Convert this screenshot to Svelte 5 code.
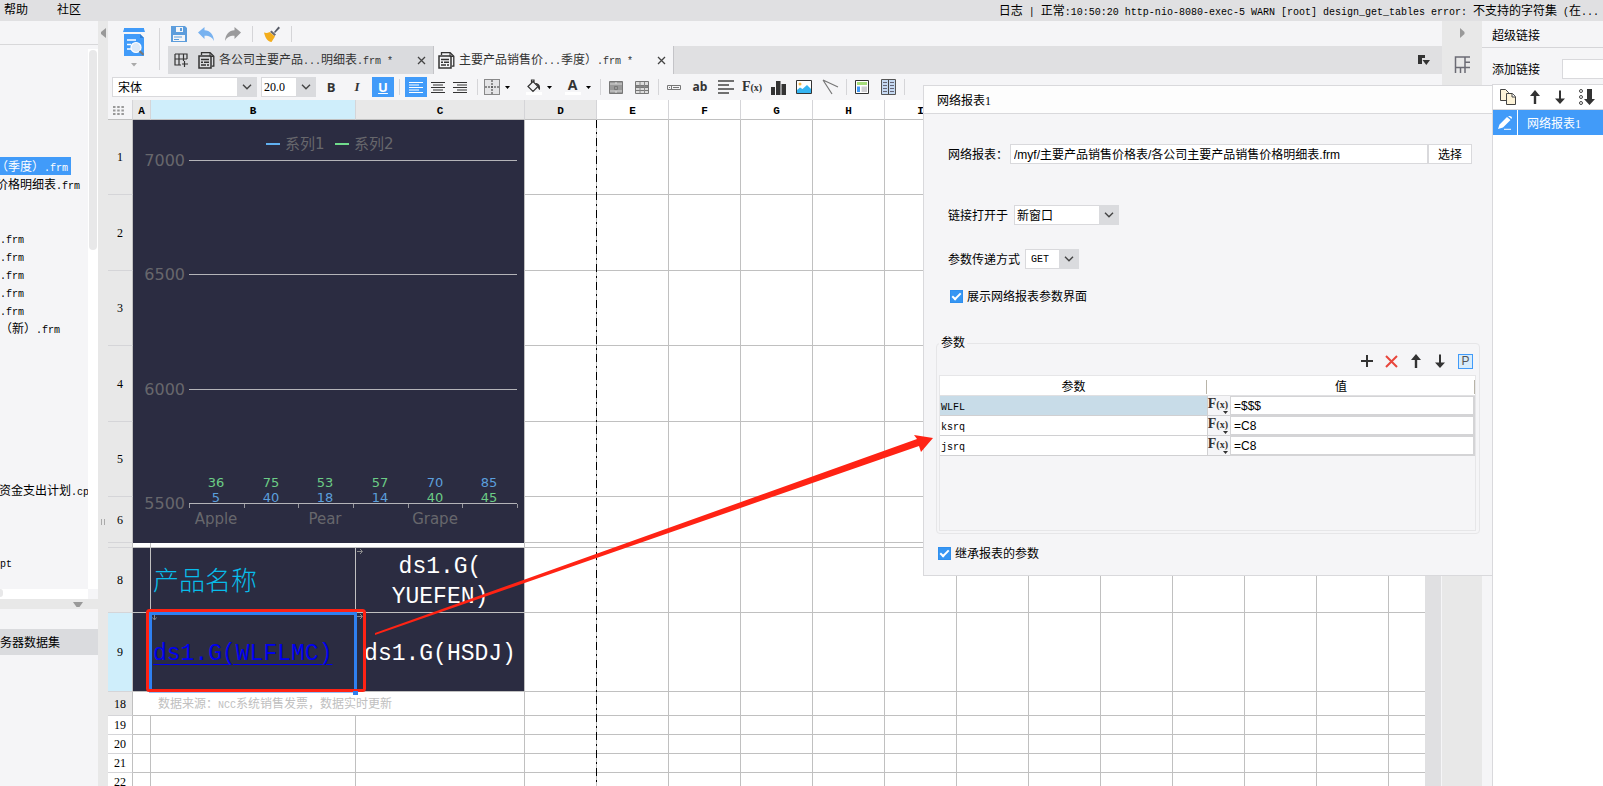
<script>
  let fontName = $state("宋体");
  let fontSize = $state("20.0");
  let reportPath = $state("/myf/主要产品销售价格表/各公司主要产品销售价格明细表.frm");
  let linkName = $state("");
  let openIn = $state("新窗口");
  let method = $state("GET");
  let showParams = $state(true);
  let inherit = $state(true);
  let activeTab = $state(1);

  let params = $state([
    { name: "WLFL", value: "=$$$" },
    { name: "ksrq", value: "=C8" },
    { name: "jsrq", value: "=C8" },
  ]);

  const logText =
    "日志 | 正常:10:50:20 http-nio-8080-exec-5 WARN [root] design_get_tables error: 不支持的字符集 (在...";

  // the tree is scrolled sideways, so most rows only show their tail
  const files = [
    "（季度）.frm", "价格明细表.frm", "", "", ".frm", ".frm", ".frm", ".frm", ".frm",
    "（新）.frm", "", "", "", "", "", "", "", "", "资金支出计划.cp", "", "", "", "pt",
  ];
  const indents = { 0: -4, 1: -4, 18: -1 };

  const tabs = ["各公司主要产品...明细表.frm *", "主要产品销售价...季度）.frm *"];

  const columns = [..."ABCDEFGHIJKLMNO", ""];
  const colWidths = [25, 18, 205, 169, ...Array(13).fill(72)];
  const tableWidth = colWidths.reduce((a, b) => a + b, 0);
  const rest = columns.slice(3);
  const rows = [
    { n: 1, h: 75 }, { n: 2, h: 76 }, { n: 3, h: 75 }, { n: 4, h: 76 }, { n: 5, h: 75 },
    { n: 6, h: 46 }, { n: "", h: 5 }, { n: 8, h: 65 }, { n: 9, h: 79 }, { n: 18, h: 24 },
    { n: 19, h: 19 }, { n: 20, h: 19 }, { n: 21, h: 19 }, { n: 22, h: 19 },
  ];

  const gridLines = [
    { label: "7000", y: 41 },
    { label: "6500", y: 155 },
    { label: "6000", y: 270 },
    { label: "5500", y: 384 },
  ];
  const points = [
    { x: 83, top: 36, bottom: 5, name: "Apple" },
    { x: 138, top: 75, bottom: 40 },
    { x: 192, top: 53, bottom: 18, name: "Pear" },
    { x: 247, top: 57, bottom: 14 },
    { x: 302, top: 70, bottom: 40, name: "Grape", swap: true },
    { x: 356, top: 85, bottom: 45, swap: true },
  ];
  const ticks = [56, 111, 165, 220, 275, 329, 384];
</script>

{#snippet mixed(text)}
  {#each text.split(/([\x20-\x7e]+)/) as part}{#if /^[\x20-\x7e]/.test(part)}<span class="en">{part}</span>{:else}{part}{/if}{/each}
{/snippet}

{#snippet chevron()}
  <span class="chevron">
    <svg width="10" height="6" viewBox="0 0 10 6"><path d="M1 .8 5 4.8 9 .8" fill="none" stroke="#444" stroke-width="1.4" /></svg>
  </span>
{/snippet}

{#snippet arrowUp()}
  <svg width="12" height="16" viewBox="0 0 12 16"><path d="M6 1 11 7H7.2v8H4.8V7H1z" fill="#333" /></svg>
{/snippet}

{#snippet arrowDown()}
  <svg width="12" height="16" viewBox="0 0 12 16"><path d="M6 15 1 9.5H5V1.5H7V9.5h4z" fill="#333" /></svg>
{/snippet}

{#snippet docIcon()}
  <svg width="17" height="17" viewBox="0 0 17 17" fill="none" stroke="#333">
    <path d="M3.500 3V.7h8.600l3.700 3.600v9.900h-2" stroke-width="1.300" />
    <path d="M12 1v3.500h3.600" />
    <path d="M1 4h12v12H1z" stroke-width="1.500" />
    <path d="M3 7.500h8M3 10.200h2M6 10.200h5M3 13h5M9 13h2" stroke-width="1.500" />
  </svg>
{/snippet}

{#snippet fx()}
  <span class="fx">F<small>(x)</small></span>
{/snippet}

{#snippet expandRight()}
  <svg class="expand" width="7" height="7" viewBox="0 0 7 7"><path d="M1 3.500h5M4 1l2.500 2.500L4 6" fill="none" stroke="#8c8c8c" /></svg>
{/snippet}

<div class="app">
  <header class="menubar">
    <nav>
      <a href="#help">帮助</a>
      <a href="#community">社区</a>
    </nav>
    <p class="log">{@render mixed(logText)}</p>
  </header>

  <div class="body">
    <aside class="left">
      <div class="left-head"></div>
      <div class="tree">
        <ul>
          {#each files as file, i}
            <li><span class:selected={i === 0} style="margin-left: {indents[i] ?? 0}px">{@render mixed(file)}</span></li>
          {/each}
        </ul>
        <div class="track"><i></i></div>
      </div>
      <div class="htrack"><i></i></div>
      <div class="hsplit">
        <svg width="10" height="6" viewBox="0 0 10 6"><path d="M0 0h10L6.500 5h-3z" fill="#999" /></svg>
      </div>
      <div class="dataset">
        <div class="dataset-row">务器数据集</div>
      </div>
    </aside>

    <div class="vsplit">
      <svg width="6" height="10" viewBox="0 0 6 10"><path d="M5 0v10L0 6V4z" fill="#999" /></svg>
      <svg width="4" height="6" viewBox="0 0 4 6"><path d="M.5 0v6M3.500 0v6" stroke="#aaa" /></svg>
    </div>

    <main class="editor">
      <div class="top">
        <button class="preview" aria-label="预览">
          <svg width="22" height="29" viewBox="0 0 22 29">
            <path d="M1 0h20v1l1 3H0l1-3z" fill="#419bf9" />
            <path d="M1 6h16l4 4v18H1z" fill="#419bf9" />
            <path d="M17 6v4h4z" fill="#2f7fd6" />
            <path d="M4 12h9M4 16.500h4M4 21h4" stroke="#fff" stroke-width="1.6" />
            <circle cx="13" cy="19.500" r="5" fill="#dce9f8" stroke="#fff" stroke-width="1.2" />
            <path d="m16.500 23 4 3.800" stroke="#777" stroke-width="2" />
          </svg>
          <svg width="6" height="4" viewBox="0 0 6 4"><path d="M0 0h6L3 3.500z" fill="#aaa" /></svg>
        </button>
        <div class="top-right">
          <div class="quick">
            <button aria-label="保存">
              <svg width="16" height="16" viewBox="0 0 16 16">
                <path d="M0 0h14l2 2v14H0z" fill="#5d9ddc" />
                <path d="M5 1h7v5H5zM2 9h12v6H2z" fill="#f4f5f7" />
                <path d="M9 2h2v3H9z" fill="#5d9ddc" />
                <path d="M3 11h8M3 13.500h5" stroke="#5d9ddc" />
              </svg>
            </button>
            <button aria-label="撤销">
              <svg width="16" height="14" viewBox="0 0 16 14"><path d="M0 5.500 6.500 0v3.200C12 3.500 15.500 7 16 14c-2-4-5-5.400-9.500-5.200V12z" fill="#78b2f0" /></svg>
            </button>
            <button aria-label="重做">
              <svg width="16" height="14" viewBox="0 0 16 14"><path d="M16 5.500 9.500 0v3.200C4 3.500.5 7 0 14c2-4 5-5.400 9.500-5.200V12z" fill="#9a9a9c" /></svg>
            </button>
            <i class="bar"></i>
            <button aria-label="格式刷">
              <svg width="16" height="16" viewBox="0 0 16 16">
                <path d="m10 6 4.500-5.500L16 2l-5 5z" fill="#555a66" />
                <path d="m7.500 4.500 4.500 4-1.500 1.500-4.500-4z" fill="#6b6b70" />
                <path d="M5.500 6 11 10.500 7.500 16C4 15.500 1.500 13 0 6.500c2 .8 4 .5 5.500-.5z" fill="#f3ad1c" />
              </svg>
            </button>
            <i class="bar"></i>
          </div>
          <div class="tabs">
            <button class="new-tab" aria-label="新建">
              <svg width="15" height="15" viewBox="0 0 15 15" fill="none" stroke="#333" stroke-width="1.2">
                <path d="M1 1h12v5M1 1v11h6M1 6h12M5 1v11M9.500 1v7M10.500 8v6M8 11h6" />
              </svg>
            </button>
            {#each tabs as tab, i}
              <div class="tab" class:active={activeTab === i}>
                <button class="tab-name" onclick={() => (activeTab = i)}>
                  {@render docIcon()}
                  <span class="tab-text">{@render mixed(tab)}</span>
                </button>
                <button aria-label="关闭">
                  <svg width="9" height="9" viewBox="0 0 9 9"><path d="m1 1 7 7M8 1 1 8" stroke="#444" stroke-width="1.3" /></svg>
                </button>
              </div>
            {/each}
            <button class="tab-list" aria-label="标签列表">
              <svg width="12" height="11" viewBox="0 0 12 11"><path d="M0 0h7v3H4v6H0zM4.500 5H12l-3.700 5z" fill="#333" /></svg>
            </button>
          </div>
        </div>
      </div>

      <div class="format">
        <label class="combo font">
          <select bind:value={fontName} aria-label="字体"><option>宋体</option></select>
          {@render chevron()}
        </label>
        <label class="combo size">
          <select bind:value={fontSize} aria-label="字号"><option>20.0</option></select>
          {@render chevron()}
        </label>
        <div class="style-group">
          <button class="b">B</button>
          <button class="i">I</button>
          <button class="u on">U</button>
        </div>
        <i class="sep"></i>
        <div class="align-group">
          <button class="on" aria-label="左对齐">
            <svg width="14" height="11" viewBox="0 0 14 11"><path d="M0 .5h14M0 3h10M0 5.500h14M0 8h10M0 10.500h14" stroke="#fff" /></svg>
          </button>
          <button aria-label="居中">
            <svg width="14" height="11" viewBox="0 0 14 11"><path d="M0 .5h14M2 3h10M0 5.500h14M2 8h10M0 10.500h14" stroke="#333" /></svg>
          </button>
          <button aria-label="右对齐">
            <svg width="14" height="11" viewBox="0 0 14 11"><path d="M0 .5h14M4 3h10M0 5.500h14M4 8h10M0 10.500h14" stroke="#333" /></svg>
          </button>
        </div>
        <i class="sep"></i>
        <button class="drop border" aria-label="边框">
          <svg width="16" height="16" viewBox="0 0 16 16"><path d="M.5.500h15v15H.5z" fill="#e4e4e6" stroke="#222" stroke-dasharray="1 1" /><path d="M8 1v14M1 8h14" stroke="#333" stroke-dasharray="2 1" /></svg>
          <svg width="5" height="3" viewBox="0 0 5 3"><path d="M0 0h5L2.500 3z" /></svg>
        </button>
        <button class="drop" aria-label="填充">
          <svg width="16" height="16" viewBox="0 0 16 16">
            <path d="M0 13h16v3H0z" fill="#fff" />
            <path d="M2 7.500 7 2.500l5 5-5 5zM5.500 4.500V1h2.500v3" fill="#f4f5f7" stroke="#333" stroke-width="1.2" />
            <path d="M9 4c4 0 5.500 2 5 7-1.500-.5-2.500-2-2-4z" fill="#333" />
          </svg>
          <svg width="5" height="3" viewBox="0 0 5 3"><path d="M0 0h5L2.500 3z" /></svg>
        </button>
        <button class="drop" aria-label="字体颜色">
          <span class="font-color">A</span>
          <svg width="5" height="3" viewBox="0 0 5 3"><path d="M0 0h5L2.500 3z" /></svg>
        </button>
        <i class="sep"></i>
        <button class="tool" aria-label="合并单元格">
          <svg width="14" height="13" viewBox="0 0 14 13"><path d="M.5.5h13v12H.5z" fill="#999" stroke="#777" /><path d="M1 3h12M1 10h12" stroke="#d8d8d8" /><path d="M7 1v2M7 10v2" stroke="#ddd" /><path d="M5.500 5.500h3v3h-3z" fill="none" stroke="#777" /></svg>
        </button>
        <button class="tool" aria-label="取消合并">
          <svg width="14" height="13" viewBox="0 0 14 13"><path d="M.5.5h13v12H.5z" fill="#ddd" stroke="#777" /><path d="M1 4.500h12v2H1zM1 9.500h12" fill="#888" stroke="#777" /><path d="M5 1v11M9.500 1v11" stroke="#888" /></svg>
        </button>
        <i class="sep"></i>
        <button class="tool" aria-label="控件">
          <svg width="14" height="5" viewBox="0 0 14 5"><path d="M.5.5h13v4H.5zM4.500.500v4M6 2.500h6M2 2.500h1" fill="none" stroke="#777" /></svg>
        </button>
        <button class="tool ab">ab</button>
        <button class="tool" aria-label="富文本">
          <svg width="16" height="14" viewBox="0 0 16 14"><path d="M0 1h16M0 5h11M0 9h16M0 13h11" stroke="#444" stroke-width="1.700" /></svg>
        </button>
        <button class="tool" aria-label="公式">{@render fx()}</button>
        <button class="tool" aria-label="图表">
          <svg width="15" height="15" viewBox="0 0 15 15"><path d="M0 7h4v8H0zM5 1h4.500v14H5zM10.500 4H15v11h-4.500z" fill="#333" /></svg>
        </button>
        <button class="tool" aria-label="图片">
          <svg width="16" height="14" viewBox="0 0 16 14"><path d="M.5.5h15v13H.5z" fill="#fff" stroke="#333" /><path d="M1 10 4 7.500 6.500 9 11 5l4 4v4H1z" fill="#35b5f2" /><circle cx="4" cy="4" r="1.500" fill="#f5b748" /></svg>
        </button>
        <button class="tool" aria-label="斜线">
          <svg width="17" height="16" viewBox="0 0 17 16"><path d="M1 1 16 8M1 1 10 15" fill="none" stroke="#777" stroke-width="1.2" /></svg>
        </button>
        <i class="sep"></i>
        <button class="tool" aria-label="子报表">
          <svg width="14" height="14" viewBox="0 0 14 14"><path d="M.5.500h13v13H.5z" fill="#fff" stroke="#333" /><path d="M2 2h10v3H2z" fill="#a6dd7b" /><path d="M2 6.500h3V12H2z" fill="#419bf9" /><path d="M6.500 6.500H12V12H6.500z" fill="#cfcfd2" /></svg>
        </button>
        <button class="tool" aria-label="分栏">
          <svg width="15" height="16" viewBox="0 0 15 16"><path d="M.5.500h14v15H.5z" fill="#c5d9f2" stroke="#555" /><path d="M7.500 1v14" stroke="#444" /><path d="M2 3.500h4M2 6.500h4M2 9.500h4M2 12.500h4M9 3.500h4M9 6.500h4M9 9.500h4M9 12.500h4" stroke="#667" /></svg>
        </button>
        <i class="sep"></i>
      </div>

      <div class="sheet-wrap">
        <div class="sheet">
          <table class="grid" style="width: {tableWidth}px">
            <colgroup>
              {#each colWidths as w}<col style="width: {w}px" />{/each}
            </colgroup>
            <thead>
              <tr>
                <th class="corner">
                  <svg width="11" height="9" viewBox="0 0 11 9"><path d="M0 1h11M0 4.500h11M0 8h11" stroke="#999" stroke-width="2" stroke-dasharray="2.500 1.700" /></svg>
                </th>
                {#each columns as c, i}
                  <th class:used={i < 4} class:current={c === "B"}>{c}</th>
                {/each}
              </tr>
            </thead>
            <tbody>
              {#each rows as row, r}
                <tr style="height: {row.h}px">
                  <th class:used={r < 10} class:current={row.n === 9}>{row.n}</th>
                  {#if r === 0}
                    <td class="chart" colspan="3" rowspan="6">
                      <svg width="391" height="423" viewBox="0 0 391 423">
                        <path d="M133 24h14" stroke="#60b0f0" stroke-width="2" />
                        <text class="axis" x="152" y="29">系列1</text>
                        <path d="M202 24h14" stroke="#70dc8c" stroke-width="2" />
                        <text class="axis" x="221" y="29">系列2</text>
                        {#each gridLines as g}
                          <text class="axis num" x="52" y={g.y + 5} text-anchor="end">{g.label}</text>
                          <path d="M56 {g.y - 0.5}h328" stroke="#b4b4b8" />
                        {/each}
                        {#each ticks as t}
                          <path d="M{t + 0.5} 384v4" stroke="#97979d" />
                        {/each}
                        {#each points as p}
                          <text class="value" class:green={!p.swap} x={p.x} y="367">{p.top}</text>
                          <text class="value" class:green={p.swap} x={p.x} y="382">{p.bottom}</text>
                          {#if p.name}<text class="cat" x={p.x} y="404">{p.name}</text>{/if}
                        {/each}
                      </svg>
                    </td>
                  {:else if r === 6}
                    <td></td><td colspan="2"></td>
                  {:else if r === 7}
                    <td class="dark"></td>
                    <td class="dark title">产品名称</td>
                    <td class="dark expr">{@render expandRight()}ds1.G(<br />YUEFEN)</td>
                  {:else if r === 8}
                    <td class="dark"></td>
                    <td class="dark link"><a href="#report">ds1.G(WLFLMC)</a></td>
                    <td class="dark expr">{@render expandRight()}ds1.G(HSDJ)</td>
                  {:else if r === 9}
                    <td class="note" colspan="3">数据来源：<span class="en">NCC</span>系统销售发票，数据实时更新</td>
                  {:else if r > 9}
                    <td></td><td></td><td></td>
                  {/if}
                  {#each rest as c}<td></td>{/each}
                </tr>
              {/each}
            </tbody>
          </table>

          <svg class="page-break" width="1" height="100%"><path d="M.5 0V2000" stroke="#000" stroke-dasharray="8 4 2 4" /></svg>
          <svg class="marks" width="220" height="96" viewBox="0 0 220 96">
            <path d="M4.500 5.500h205v77.500h-205z" fill="none" stroke="#2f80f0" stroke-width="3" />
            <path d="M8.500 7v5M6.500 9.500l2 2.500 2-2.500" fill="none" stroke="#888" />
            <rect x="1.500" y="2.500" width="217" height="80" rx="2" fill="none" stroke="#ff2314" stroke-width="3" />
            <path d="M207 83h5v4h-5z" fill="#2f80f0" />
          </svg>
        </div>
        <div class="sheet-scroll"></div>
      </div>
    </main>

    <div class="strip">
      <svg width="6" height="10" viewBox="0 0 6 10"><path d="M1 0v10L5.500 6V4z" fill="#999" /></svg>
      <button aria-label="单元格属性">
        <svg width="16" height="17" viewBox="0 0 16 17" fill="none" stroke="#6b6b74" stroke-width="1.5"><path d="M1.500 17V1H16M1.500 11.500H16M11 1v16M6.500 11.500V17M11 6.200h5" /></svg>
      </button>
    </div>

    <aside class="right">
      <h2>超级链接</h2>
      <label class="add"><span>添加链接</span><input type="text" bind:value={linkName} /></label>
      <div class="links">
        <div class="links-bar">
          <button aria-label="复制">
            <svg width="16" height="16" viewBox="0 0 16 16" fill="#fdf3d8" stroke="#444"><path d="M.5.500h5l3 3v8h-8z" /><path d="M6.500 4.500h6l3 3v8h-9z" /><path d="M12 4.500v3.500h3.500" fill="#fff" /></svg>
          </button>
          <button aria-label="上移">{@render arrowUp()}</button>
          <button aria-label="下移">{@render arrowDown()}</button>
          <button aria-label="排序">
            <svg width="16" height="16" viewBox="0 0 16 16"><g fill="#fff" stroke="#444"><circle cx="2" cy="2" r="1.500" /><circle cx="2" cy="8" r="1.500" /><circle cx="2" cy="14" r="1.500" /></g><path d="M8 0h5v10h3l-5.500 6L5 10h3z" fill="#333" /></svg>
          </button>
        </div>
        <div class="link-item">
          <span class="edit">
            <svg width="14" height="14" viewBox="0 0 14 14"><path d="M0 13 1.500 8.500 9 1l3.500 3L5 11.500zM10 0l3.500 3 .500-2L12 0z" fill="#fff" /><path d="M6 13.300h7" stroke="#fff" /></svg>
          </span>
          <span class="name">网络报表1</span>
        </div>
      </div>
    </aside>

    <section class="dialog">
      <h3>网络报表1</h3>
      <div class="form">
        <div class="field path">
          <label for="path">网络报表：</label>
          <input id="path" type="text" bind:value={reportPath} />
          <button>选择</button>
        </div>
        <div class="field open">
          <label for="open">链接打开于</label>
          <div class="combo">
            <select id="open" bind:value={openIn}><option>新窗口</option></select>
            {@render chevron()}
          </div>
        </div>
        <div class="field method">
          <label for="method">参数传递方式</label>
          <div class="combo">
            <select id="method" bind:value={method}><option>GET</option></select>
            {@render chevron()}
          </div>
        </div>
        <label class="check"><input type="checkbox" bind:checked={showParams} />展示网络报表参数界面</label>
      </div>

      <fieldset>
        <legend>参数</legend>
        <div class="param-tools">
          <button aria-label="添加"><svg width="12" height="12" viewBox="0 0 12 12"><path d="M6 0v12M0 6h12" stroke="#333" stroke-width="2" /></svg></button>
          <button aria-label="删除"><svg width="13" height="13" viewBox="0 0 13 13"><path d="m1 1 11 11M12 1 1 12" stroke="#e8463c" stroke-width="2" /></svg></button>
          <button aria-label="上移">{@render arrowUp()}</button>
          <button aria-label="下移">{@render arrowDown()}</button>
          <button class="p">P</button>
        </div>
        <div class="param-box">
          <table class="params">
            <colgroup><col style="width: 267px" /><col style="width: 23px" /><col /></colgroup>
            <thead>
              <tr><th>参数</th><th colspan="2">值</th></tr>
            </thead>
            <tbody>
              {#each params as p, i}
                <tr class:selected={i === 0}>
                  <td><span class="en">{p.name}</span></td>
                  <td class="type"><button aria-label="公式">{@render fx()}<svg width="5" height="3" viewBox="0 0 5 3"><path d="M0 0h5L2.500 3z" fill="#333" /></svg></button></td>
                  <td class="val"><input type="text" bind:value={p.value} aria-label={p.name} /></td>
                </tr>
              {/each}
            </tbody>
          </table>
        </div>
      </fieldset>
      <label class="check inherit"><input type="checkbox" bind:checked={inherit} />继承报表的参数</label>
    </section>

    <svg class="pointer" width="560" height="204" viewBox="0 0 560 204">
      <path d="M0 200 542 6 539 2 558 5 546 19 544 13 0 202z" fill="#ff2314" />
    </svg>
  </div>
</div>

<style>
  :global(body) {
    margin: 0;
    background: #f5f5f7;
  }

  .app {
    display: flex;
    flex-direction: column;
    height: 100vh;
    overflow: hidden;
    font-family: "Liberation Serif", "Noto Sans CJK SC", serif;
    font-size: 12px;
    line-height: 16px;
    color: #000;
  }

  .app * {
    box-sizing: border-box;
  }

  svg {
    display: block;
    flex: none;
  }

  button {
    display: flex;
    align-items: center;
    justify-content: center;
    padding: 0;
    border: none;
    background: none;
    font: inherit;
    color: inherit;
  }

  input,
  select {
    margin: 0;
    border-radius: 0;
    font: inherit;
    color: inherit;
  }

  .en {
    font-family: "Liberation Mono", monospace;
    font-size: 10px;
    white-space: pre;
  }

  .menubar {
    display: flex;
    justify-content: space-between;
    height: 21px;
    background: #e0e0e2;
  }

  .menubar nav {
    display: flex;
    gap: 29px;
    padding: 2px 0 0 4px;
  }

  .menubar a {
    color: #000;
    text-decoration: none;
  }

  .log {
    margin: 0;
    padding: 3px 4px 0 0;
    white-space: nowrap;
  }

  .body {
    position: relative;
    display: flex;
    flex: 1;
    min-height: 0;
  }

  .left {
    display: flex;
    flex-direction: column;
    width: 98px;
    background: #f5f5f7;
  }

  .left-head {
    height: 24px;
    border-bottom: 1px solid #d8d8da;
  }

  .tree {
    display: flex;
    justify-content: space-between;
    height: 544px;
    padding-top: 4px;
  }

  .tree ul {
    width: 88px;
    margin: 0;
    padding: 108px 0 0;
    overflow: hidden;
    list-style: none;
  }

  .tree li {
    display: flex;
    height: 18px;
    line-height: 20px;
    white-space: nowrap;
  }

  .tree .selected {
    padding-right: 3px;
    background: #419bf9;
    color: #fff;
  }

  .track {
    width: 10px;
    padding: 1px;
    background: #fff;
  }

  .track i {
    display: block;
    height: 200px;
    border-radius: 4px;
    background: #e8e8e9;
  }

  .htrack {
    width: 88px;
    height: 10px;
    background: #fff;
  }

  .htrack i {
    display: block;
    width: 3px;
    height: 8px;
    border-radius: 0 4px 4px 0;
    background: #e8e8e9;
  }

  .hsplit {
    display: flex;
    justify-content: flex-end;
    height: 10px;
    padding: 3px 15px 0 0;
    background: #e8e8e8;
  }

  .dataset {
    flex: 1;
    padding-top: 20px;
  }

  .dataset-row {
    height: 26px;
    background: #dadbde;
    line-height: 29px;
  }

  .vsplit {
    display: flex;
    flex-direction: column;
    justify-content: space-between;
    width: 10px;
    padding: 7px 3px 261px;
    background: #e8e8e8;
  }

  .editor {
    display: flex;
    flex-direction: column;
    flex: 1;
    min-width: 0;
    background: #f5f5f7;
  }

  .top {
    display: flex;
  }

  .preview {
    flex-direction: column;
    justify-content: flex-start;
    gap: 6px;
    width: 52px;
    height: 42px;
    margin: 7px 8px 0 0;
    border-right: 1px solid #d5d5d8;
  }

  .top-right {
    flex: 1;
    min-width: 0;
  }

  .quick {
    display: flex;
    align-items: center;
    gap: 11px;
    height: 25px;
    padding-left: 3px;
  }

  .bar {
    width: 1px;
    height: 16px;
    background: #d5d5d8;
  }

  .tabs {
    display: flex;
    height: 28px;
    background: #e0e0e2;
  }

  .new-tab {
    width: 26px;
    background: #dadbde;
  }

  .tab {
    display: flex;
    justify-content: space-between;
    width: 240px;
    padding: 0 7px 0 4px;
    border-right: 1px solid #c4c4c8;
    background: #dadbde;
    color: #333;
  }

  .tab.active {
    background: #f5f5f7;
  }

  .tab-name {
    gap: 4px;
  }

  .tab-text {
    padding-top: 2px;
  }

  .tab-list {
    margin: 0 12px 0 auto;
  }

  .format {
    display: flex;
    align-items: center;
    height: 26px;
    padding-left: 4px;
  }

  .combo {
    display: grid;
    height: 20px;
    background: #fff;
  }

  .combo select {
    grid-area: 1 / 1;
    width: 100%;
    height: 20px;
    padding: 1px 22px 0 2px;
    border: 1px solid #d9d9dc;
    background: transparent;
    line-height: 16px;
    appearance: none;
  }

  .chevron {
    grid-area: 1 / 1;
    display: flex;
    align-items: center;
    justify-content: center;
    justify-self: end;
    width: 20px;
    height: 20px;
    background: #dadbde;
    pointer-events: none;
  }

  .font {
    width: 145px;
    margin-right: 4px;
  }

  .font select {
    padding-left: 5px;
  }

  .size {
    width: 55px;
    margin-right: 4px;
  }

  .size select {
    padding-top: 0;
  }

  .style-group {
    display: flex;
    gap: 4px;
    margin-right: 2px;
  }

  .style-group button,
  .align-group button {
    width: 22px;
    height: 20px;
    font: bold 13px/20px "Open Sans", sans-serif;
    color: #333;
  }

  .style-group .i {
    font-family: "Liberation Serif", serif;
    font-style: italic;
  }

  .style-group .on,
  .align-group .on {
    background: #419bf9;
    color: #fff;
  }

  .style-group .u {
    text-decoration: underline;
  }

  .align-group {
    display: flex;
    margin: 0 3px;
  }

  .sep {
    width: 1px;
    height: 16px;
    margin: 0 2px 0 3px;
    background: #d5d5d8;
  }

  .drop {
    gap: 5px;
    width: 39px;
    height: 20px;
  }

  .drop.border {
    justify-content: flex-start;
    padding-left: 4px;
  }

  .font-color {
    width: 16px;
    height: 16px;
    border-bottom: 3px solid #fff;
    font: bold 14px/12px "Open Sans", sans-serif;
    color: #333;
  }

  .tool {
    width: 26px;
    height: 20px;
  }

  .ab {
    font: bold 12px/20px "Open Sans", sans-serif;
    color: #333;
  }

  .fx {
    font: bold 14px/16px "Liberation Serif", serif;
    color: #333;
    white-space: nowrap;
  }

  .fx small {
    font-size: 10px;
  }

  .sheet-wrap {
    display: flex;
    flex: 1;
    min-height: 0;
  }

  .sheet {
    position: relative;
    flex: 1;
    min-width: 0;
    overflow: hidden;
    background: #fff;
  }

  .sheet-scroll {
    width: 17px;
    border-right: 1px solid #f5f5f7;
    background: #e0e0e2;
  }

  .grid {
    table-layout: fixed;
    border-spacing: 0;
  }

  .grid td,
  .grid th {
    padding: 0;
    border-right: 1px solid #c0c0c0;
    border-bottom: 1px solid #c0c0c0;
    line-height: 14px;
  }

  .grid thead tr {
    height: 20px;
  }

  .grid th {
    border-bottom-color: #d5d5d8;
    font-weight: normal;
  }

  .grid thead th {
    padding-top: 2px;
    border-right-color: #d5d5d8;
    border-bottom-color: #c0c0c0;
    font-family: "Liberation Mono", monospace;
    font-size: 11px;
    font-weight: bold;
  }

  .grid th.used {
    background: #e8e8e8;
  }

  .grid th.current {
    background: #cfeefb;
  }

  .grid .corner {
    padding-left: 5px;
    background: #f5f5f7;
  }

  .grid .chart {
    border-bottom: none;
    background: #2b2c41;
    vertical-align: top;
  }

  .axis,
  .cat {
    fill: #67676c;
    font: 15px "DejaVu Sans", "Noto Sans CJK SC", sans-serif;
  }

  .num {
    font-size: 16px;
  }

  .cat {
    text-anchor: middle;
  }

  .value {
    fill: #5b9fdc;
    font: 13px "DejaVu Sans", sans-serif;
    text-anchor: middle;
  }

  .value.green {
    fill: #6ccc86;
  }

  .grid .dark {
    background: #2b2c41;
  }

  .grid .title {
    padding: 4px 0 0 2px;
    color: #08bcea;
    font-size: 26px;
    font-weight: 300;
    line-height: 30px;
  }

  .grid .expr,
  .grid .link {
    position: relative;
    padding-top: 4px;
    font-family: "Liberation Mono", monospace;
    font-size: 23px;
    line-height: 30px;
    text-align: center;
    color: #fff;
  }

  .grid .link {
    padding-left: 2px;
    text-align: left;
  }

  .expand {
    position: absolute;
    top: 0;
    left: 0;
  }

  .link a {
    color: #0000f0;
    text-underline-offset: 4px;
    text-decoration-thickness: 1px;
  }

  .grid .note {
    padding: 2px 0 0 25px;
    color: #c0c0c0;
  }

  .page-break {
    position: absolute;
    top: 20px;
    left: 488px;
  }

  .marks {
    position: absolute;
    top: 508px;
    left: 38px;
  }

  .strip {
    display: flex;
    flex-direction: column;
    align-items: center;
    gap: 18px;
    width: 40px;
    padding-top: 7px;
    background: #e8e8e8;
  }

  .right {
    display: flex;
    flex-direction: column;
    width: 121px;
    padding-left: 10px;
    background: #f5f5f7;
  }

  .right h2 {
    height: 27px;
    margin: 0 0 0 -10px;
    padding-left: 10px;
    border-bottom: 1px solid #d5d5d8;
    font-size: 12px;
    font-weight: normal;
    line-height: 30px;
  }

  .add {
    display: flex;
    align-items: center;
    gap: 22px;
    height: 36px;
    padding-top: 6px;
  }

  .add span {
    flex: none;
    padding-top: 2px;
  }

  .add input {
    flex: 1;
    min-width: 0;
    height: 20px;
    border: 1px solid #d9d9dc;
    border-right: none;
    background: #fff;
  }

  .links {
    flex: 1;
    border: 1px solid #d9d9dc;
    border-width: 1px 0 0 1px;
    background: #fff;
  }

  .links-bar {
    display: flex;
    align-items: center;
    gap: 13px;
    height: 25px;
    padding-left: 7px;
    border-bottom: 1px solid #d9d9dc;
  }

  .link-item {
    display: flex;
    height: 25px;
    background: #419bf9;
    color: #fff;
    line-height: 28px;
  }

  .edit {
    display: flex;
    align-items: center;
    justify-content: center;
    width: 25px;
    border-right: 1px solid #fff;
  }

  .name {
    padding-left: 9px;
  }

  .dialog {
    position: absolute;
    top: 64px;
    right: 110px;
    width: 570px;
    border: 1px solid #d9d9dc;
    background: #f5f5f7;
  }

  .dialog h3 {
    height: 28px;
    margin: 0;
    padding-left: 13px;
    border-bottom: 1px solid #d9d9dc;
    background: #fdfdfd;
    font-size: 12px;
    font-weight: normal;
    line-height: 31px;
  }

  .form {
    padding: 30px 20px 0 24px;
  }

  .field {
    display: flex;
    align-items: center;
    height: 20px;
  }

  .field label,
  .path button {
    padding-top: 2px;
  }

  .path {
    margin-bottom: 41px;
  }

  .path input {
    flex: 1;
    height: 20px;
    margin-left: 2px;
    padding: 0 3px 2px;
    border: 1px solid #d9d9dc;
    background: #fff;
    font-family: "Liberation Sans", "Noto Sans CJK SC", sans-serif;
  }

  .path button {
    width: 44px;
    height: 20px;
    border: 1px solid #d9d9dc;
    background: #fff;
  }

  .open {
    gap: 6px;
    margin-bottom: 24px;
  }

  .open .combo {
    width: 105px;
  }

  .method {
    gap: 5px;
    margin-bottom: 21px;
  }

  .method .combo {
    width: 54px;
  }

  .method select {
    padding-left: 5px;
    font-family: "Liberation Mono", monospace;
    font-size: 10px;
  }

  .check {
    display: flex;
    align-items: center;
    gap: 4px;
    height: 13px;
    padding-left: 2px;
    line-height: 18px;
  }

  .check input {
    display: grid;
    place-items: center;
    width: 13px;
    height: 13px;
    border: 1px solid #2f8fee;
    background: #fff;
    appearance: none;
  }

  .check input:checked {
    background: #3696f3;
  }

  .check input:checked::before {
    content: "";
    width: 3px;
    height: 7px;
    margin-bottom: 2px;
    border: solid #fff;
    border-width: 0 2px 2px 0;
    rotate: 45deg;
  }

  fieldset {
    margin: 32px 12px 13px;
    padding: 0 3px 2px 2px;
    border: 1px solid #e6e6e8;
    border-radius: 4px;
  }

  legend {
    margin-left: 0;
    padding: 0 2px;
  }

  .param-tools {
    display: flex;
    align-items: center;
    justify-content: flex-end;
    gap: 12px;
    height: 24px;
    padding: 0 3px 4px 0;
  }

  .param-tools .p {
    width: 15px;
    height: 15px;
    border: 1px solid #419bf9;
    background: #d8ecfb;
    font: 12px/13px "Liberation Sans", sans-serif;
    color: #555;
  }

  .param-box {
    height: 156px;
    border: 1px solid #e6e6e8;
  }

  .params {
    width: 100%;
    table-layout: fixed;
    border-spacing: 0;
  }

  .params th {
    height: 20px;
    padding: 3px 0 0;
    border-bottom: 1px solid #e0e0e2;
    background: linear-gradient(#b8b4a8, #b8b4a8) no-repeat right 4px / 1px 14px #fff;
    font-weight: normal;
    line-height: 16px;
  }

  .params td {
    height: 20px;
    padding: 2px 0 0 1px;
    border-bottom: 1px solid #d0d0d2;
    background: #fff;
    line-height: 14px;
  }

  .params .selected td {
    background: #c8dce8;
  }

  .params .type,
  .params .selected .type {
    padding: 0;
    border-left: 1px solid #d0d0d2;
    background: #f5f5f7;
  }

  .type button {
    flex-direction: column;
    align-items: flex-end;
    width: 20px;
    height: 19px;
  }

  .type .fx {
    line-height: 13px;
  }

  .params .val {
    padding: 0;
    border: none;
  }

  .val input {
    display: block;
    width: 100%;
    height: 20px;
    padding: 0 3px;
    border: 1px solid #d4d4d6;
    border-width: 1px 2px 2px 1px;
    background: #fff;
    font-family: "Liberation Sans", sans-serif;
  }

  .inherit {
    margin: 0 0 15px 12px;
  }

  .pointer {
    position: absolute;
    top: 412px;
    left: 375px;
    pointer-events: none;
  }
</style>
